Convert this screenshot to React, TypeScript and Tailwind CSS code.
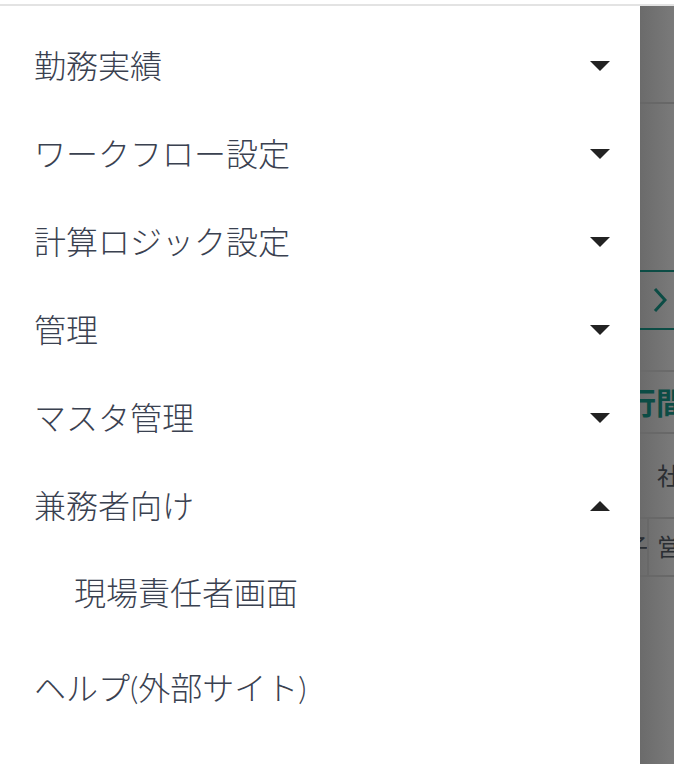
import React from 'react';

interface MenuItem {
  label: string;
  open?: boolean;
  children?: string[];
  expandable?: boolean;
}

const items: MenuItem[] = [
  { label: '勤務実績', expandable: true },
  { label: 'ワークフロー設定', expandable: true },
  { label: '計算ロジック設定', expandable: true },
  { label: '管理', expandable: true },
  { label: 'マスタ管理', expandable: true },
  { label: '兼務者向け', expandable: true, open: true, children: ['現場責任者画面'] },
];

const Caret: React.FC<{ up?: boolean }> = ({ up }) => (
  <svg width="20" height="10" viewBox="0 0 20 10" className="shrink-0">
    {up ? <polygon points="0,10 20,10 10,0" fill="#222" /> : <polygon points="0,0 20,0 10,10" fill="#222" />}
  </svg>
);

const App: React.FC = () => {
  return (
    <div
      className="w-[674px] h-[764px] flex flex-col bg-white overflow-hidden"
      style={{ fontFamily: "Lato, 'Noto Sans CJK JP', sans-serif" }}
    >
      <div className="h-[4px] bg-white" />
      <div className="h-[2px] bg-[#e3e3e3]" />
      <div className="flex flex-1">
        {/* drawer */}
        <nav className="w-[640px] shrink-0 bg-white pt-[16px] flex flex-col text-[32px] font-light text-[#3a4150]">
          {items.map((item) => (
            <div key={item.label}>
              <div className="h-[88px] flex items-center justify-between pl-[34px] pr-[30px]">
                <span>{item.label}</span>
                {item.expandable && <Caret up={item.open} />}
              </div>
              {item.open &&
                item.children?.map((c) => (
                  <div key={c} className="h-[86px] flex items-center pl-[74px]">
                    <span>{c}</span>
                  </div>
                ))}
            </div>
          ))}
          <div className="h-[88px] mt-[8px] flex items-center pl-[34px]">
            <span>ヘルプ(外部サイト)</span>
          </div>
        </nav>

        {/* dimmed page behind */}
        <div className="flex-1 flex flex-col bg-gradient-to-r from-[#6b6b6b] to-[#7a7a7a] overflow-hidden">
          <div className="h-[96px]" />
          <div className="h-[2px] bg-[#676767]" />
          <div className="h-[166px]" />
          <div className="h-[60px] border-y-2 border-[#0c4c45] flex items-center pl-[13px]">
            <svg width="14" height="26" viewBox="0 0 14 26">
              <polyline points="2,2 12,13 2,24" fill="none" stroke="#0c4c45" strokeWidth="3" />
            </svg>
          </div>
          <div className="h-[40px]" />
          <div className="h-[2px] bg-[#6a6a6a]" />
          <div className="h-[60px] flex items-center overflow-hidden">
            <span className="text-[30px] font-bold text-[#0c4c45] whitespace-nowrap -ml-[14px]">行間</span>
          </div>
          <div className="h-[2px] bg-[#686868]" />
          <div className="h-[83px] flex items-center overflow-hidden pl-[17px]">
            <span className="text-[24px] text-[#2a2e33] whitespace-nowrap">社員</span>
          </div>
          <div className="h-[2px] bg-[#686868]" />
          <div className="h-[56px] flex overflow-hidden">
            <div className="w-[9px] shrink-0 border-r-2 border-[#686868] flex items-center overflow-hidden">
              <span className="text-[24px] text-[#2a2e33] whitespace-nowrap -ml-[16px]">子</span>
            </div>
            <div className="flex items-center pl-[8px]">
              <span className="text-[24px] text-[#2a2e33] whitespace-nowrap">営業</span>
            </div>
          </div>
          <div className="h-[2px] bg-[#686868]" />
          <div className="flex-1" />
        </div>
      </div>
    </div>
  );
};

export default App;
